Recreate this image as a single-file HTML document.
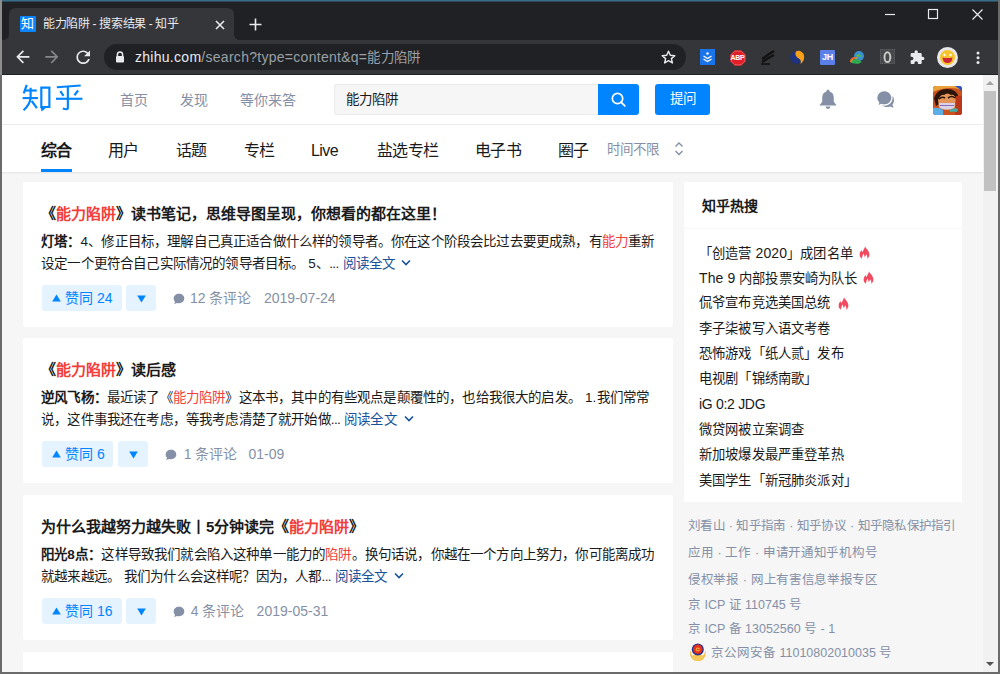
<!DOCTYPE html>
<html lang="zh-CN"><head><meta charset="utf-8">
<style>
*{box-sizing:border-box}
html,body{margin:0;padding:0;width:1000px;height:674px;overflow:hidden;background:#f6f6f6}
body{font-family:"Liberation Sans",sans-serif;position:relative;color:#1a1a1a;text-spacing-trim:space-all}
.a{position:absolute}
.t{position:absolute;white-space:nowrap;line-height:20px}
svg{position:absolute;overflow:visible}
.nav{font-size:14px;color:#8590a6}
.tabi{font-size:16px;letter-spacing:-0.6px;color:#1a1a1a}
.card{position:absolute;left:23px;width:650px;height:145px;background:#fff;border-radius:2px}
.ttl{font-size:15px;font-weight:bold;color:#1a1a1a;left:18px;top:22px}
.red{color:#f1403c}
.body{font-size:13.5px;letter-spacing:0.17px;color:#1a1a1a;left:18px}
.l1{top:50px}.l2{top:72px}
.more{color:#175199}
.vote{position:absolute;top:103px;height:26px;background:#e5f2ff;color:#0084ff;border-radius:3px;font-size:13.5px;line-height:26px}
.meta{font-size:14px;color:#8590a6;top:106px}
.vtxt{font-size:14px;color:#0084ff;top:106px}
.hot{font-size:13.33px;letter-spacing:0.16px;color:#1a1a1a;left:699px}
.sep{margin:0 4.2px 0 4px}
.foot{font-size:12.5px;letter-spacing:-0.3px;color:#8590a6;left:688px}
</style></head><body>
<!-- ===== browser chrome ===== -->
<div class="a" style="left:0;top:0;width:1000px;height:40px;background:#202124"></div>
<div class="a" style="left:0;top:0;width:1000px;height:1px;background:#386d88"></div><div class="a" style="left:0;top:1px;width:1000px;height:1px;background:#2b4a5a"></div>
<!-- active tab -->
<svg style="left:0;top:0" width="260" height="41"><path d="M2 40 Q9 40 9 34 L9 15 Q9 8 16 8 L227 8 Q234 8 234 15 L234 34 Q234 40 241 40 Z" fill="#35363a"/></svg>
<div class="a" style="left:20px;top:16px;width:16px;height:16px;background:#0a84ff;border-radius:1px"></div>
<div class="t" style="left:21px;top:14px;font-size:13px;color:#fff;line-height:20px">知</div>
<div class="t" style="left:43px;top:14px;font-size:12px;letter-spacing:-0.35px;color:#e8eaed">能力陷阱 - 搜索结果 - 知乎</div>
<svg style="left:215px;top:20px" width="10" height="10"><path d="M1 1L9 9M9 1L1 9" stroke="#e8eaed" stroke-width="1.6"/></svg>
<svg style="left:249px;top:18px" width="13" height="13"><path d="M6.5 0.5V12.5M0.5 6.5H12.5" stroke="#e8eaed" stroke-width="1.6"/></svg>
<!-- window controls -->
<svg style="left:884px;top:9px" width="100" height="12"><path d="M1 5.5H11" stroke="#e8eaed" stroke-width="1.2"/><rect x="44.5" y="0.5" width="9" height="9" fill="none" stroke="#e8eaed" stroke-width="1.2"/><path d="M88.5 0.5L98.5 10.5M98.5 0.5L88.5 10.5" stroke="#e8eaed" stroke-width="1.2"/></svg>
<!-- toolbar -->
<div class="a" style="left:0;top:40px;width:1000px;height:34px;background:#35363a"></div>
<div class="a" style="left:0;top:74px;width:1000px;height:1px;background:#202124"></div>
<svg style="left:12.7px;top:47.1px" width="20" height="20" viewBox="0 0 24.4 24.4"><path d="M20 11H7.83l5.59-5.59L12 4l-8 8 8 8 1.41-1.41L7.83 13H20v-2z" fill="#e8eaed"/></svg>
<svg style="left:42.3px;top:47.1px" width="20" height="20" viewBox="0 0 24.4 24.4"><path d="M4 11h12.17l-5.59-5.59L12 4l8 8-8 8-1.41-1.41L16.17 13H4v-2z" fill="#85878b"/></svg>
<svg style="left:72.6px;top:47.3px" width="20" height="20" viewBox="0 0 23.5 23.5"><path d="M17.65 6.35C16.2 4.9 14.21 4 12 4c-4.42 0-7.990 3.58-7.99 8s3.57 8 7.99 8c3.73 0 6.840-2.55 7.73-6h-2.08c-.82 2.33-3.04 4-5.65 4-3.310 0-6-2.69-6-6s2.69-6 6-6c1.66 0 3.14.69 4.22 1.78L13 11h7V4l-2.35 2.35z" fill="#e8eaed"/></svg>
<div class="a" style="left:104px;top:44px;width:582px;height:26px;background:#202124;border-radius:13px"></div>
<svg style="left:115px;top:51px" width="10" height="12"><path d="M2.4 5V3.6A2.6 2.6 0 0 1 7.6 3.6V5" stroke="#e8eaed" stroke-width="1.5" fill="none"/><rect x="1" y="5" width="8" height="6.5" rx="1" fill="#e8eaed"/></svg>
<div class="t" style="left:135px;top:47px;font-size:14px;letter-spacing:0.28px;color:#9aa0a6"><span style="color:#e8eaed">zhihu.com</span>/search?type=content&amp;q=<span style="font-size:13.5px;letter-spacing:0.2px">能力陷阱</span></div>
<svg style="left:661px;top:50px" width="16" height="15"><path d="M7.5 1.2L9.3 5.3L13.8 5.7L10.4 8.6L11.4 13L7.5 10.7L3.6 13L4.6 8.6L1.2 5.7L5.7 5.3Z" stroke="#e8eaed" stroke-width="1.4" fill="none" stroke-linejoin="round"/></svg>
<!-- extensions -->
<div class="a" style="left:700px;top:49px;width:15px;height:16px;background:#1a73e8"></div>
<svg style="left:700px;top:49px" width="15" height="16"><circle cx="7.5" cy="4.5" r="1.2" fill="#fff"/><path d="M3.5 7L7.5 9.5L11.5 7M3.5 10L7.5 12.5L11.5 10" stroke="#fff" stroke-width="1.3" fill="none"/></svg>
<svg style="left:729.5px;top:49.5px" width="16" height="16"><path d="M4.7 0.3H11.3L15.7 4.7V11.3L11.3 15.7H4.7L0.3 11.3V4.7Z" fill="#e01f26"/><path d="M4.9 1.2H11.1L14.8 4.9V11.1L11.1 14.8H4.9L1.2 11.1V4.9Z" fill="none" stroke="#fff" stroke-width="0.5" opacity="0.5"/></svg>
<div class="t" style="left:729.5px;top:47.5px;width:16px;text-align:center;font-size:7px;font-weight:bold;color:#fff;letter-spacing:-0.2px">ABP</div>
<svg style="left:760px;top:50px" width="16" height="15"><path d="M2 9L9 4L14 1M2 12L10 7L14 5" stroke="#111" stroke-width="2.2" fill="none"/><path d="M1 14H10" stroke="#111" stroke-width="1.5"/></svg>
<svg style="left:790px;top:49px" width="15" height="16"><circle cx="6.5" cy="8.5" r="6.3" fill="#1f3480"/><path d="M6 2.5C9 0.5 14.2 3 14.2 8C14.2 11 12.6 13.5 10.5 15C11.4 12 10.6 10.5 8.5 9.2C6 8 4.6 5 6 2.5Z" fill="#f7a01a"/></svg>
<div class="a" style="left:820px;top:50px;width:15px;height:15px;background:#5b7fe8;border-radius:1px"></div>
<div class="t" style="left:820px;top:47px;width:15px;text-align:center;font-size:9px;font-weight:bold;color:#fff;letter-spacing:-0.3px">JH</div>
<svg style="left:849px;top:50px" width="16" height="15"><circle cx="10" cy="6" r="5" fill="#3a8fd0"/><path d="M6 6L10 4L13 7" fill="#5bbf3a"/><path d="M1 12C1 7 6 6 9 8L6 9C4 9 3 11 4 13Z" fill="#f0b020"/><path d="M2 13C3 9 7 8 10 10L13 12L9 14Z" fill="#2fa84f"/><path d="M1.5 11.5C2 8 5 7.5 7 8" stroke="#e83a3a" stroke-width="1.2" fill="none"/></svg>
<div class="a" style="left:880px;top:49px;width:15px;height:15px;background:#47484b;border:1px dotted #5e5f62"></div>
<svg style="left:883px;top:51px" width="9" height="13"><ellipse cx="4.4" cy="6.2" rx="2.9" ry="4.9" stroke="#c9c9c9" stroke-width="2" fill="none"/></svg>
<svg style="left:910px;top:49.5px" width="15" height="15" viewBox="1 0.5 23 23"><path d="M20.5 11H19V7c0-1.1-.9-2-2-2h-4V3.5C13 2.12 11.88 1 10.5 1S8 2.12 8 3.5V5H4c-1.1 0-1.99.9-1.99 2v3.8H3.5c1.49 0 2.7 1.210 2.7 2.7s-1.21 2.7-2.7 2.7H2V20c0 1.1.9 2 2 2h3.8v-1.5c0-1.49 1.21-2.7 2.7-2.7 1.49 0 2.7 1.21 2.7 2.7V22H17c1.1 0 2-.9 2-2v-4h1.5c1.38 0 2.5-1.12 2.5-2.5S21.88 11 20.5 11z" fill="#e8eaed"/></svg>
<div class="a" style="left:937px;top:47px;width:21px;height:21px;background:#e8e8ea;border-radius:50%"></div>
<svg style="left:939px;top:49px" width="17" height="17"><circle cx="8.5" cy="8.5" r="7.5" fill="#f7c52b"/><circle cx="5.5" cy="6" r="1.2" fill="#fff"/><circle cx="11.5" cy="6" r="1.2" fill="#fff"/><path d="M3.5 8.5Q8.5 9.5 13.5 8.5Q13 14 8.5 14Q4 14 3.5 8.5Z" fill="#d0243a"/></svg>
<svg style="left:976px;top:51px" width="4" height="14"><circle cx="2" cy="2" r="1.5" fill="#e8eaed"/><circle cx="2" cy="6.8" r="1.5" fill="#e8eaed"/><circle cx="2" cy="11.5" r="1.5" fill="#e8eaed"/></svg>

<!-- ===== page header ===== -->
<div class="a" style="left:2px;top:75px;width:981px;height:49px;background:#fff"></div>
<div class="a" style="left:2px;top:124px;width:981px;height:1px;background:#ececec"></div>
<div class="a" style="left:2px;top:125px;width:981px;height:47px;background:#fff"></div>
<div class="a" style="left:2px;top:172px;width:981px;height:1px;background:#e8e8e8"></div>
<div class="a" style="left:2px;top:173px;width:981px;height:1px;background:#f0f0f0"></div>

<svg style="left:18px;top:80px" width="70" height="36" viewBox="0 0 1000 514"><g stroke="#0084ff" stroke-width="31" fill="none" stroke-linecap="butt" stroke-linejoin="miter">
<path d="M125 68L82 190"/><path d="M98 150H268"/><path d="M66 258H284"/><path d="M180 112V255Q172 345 80 432"/><path d="M196 300L270 402"/>
<path d="M333 108H448V386H333Z"/><path d="M336 386L346 422L385 392"/>
<path d="M555 104L895 78"/><path d="M605 160L650 226"/><path d="M858 150L806 218"/><path d="M543 268H920"/><path d="M712 96V400Q712 432 640 408"/></g></svg>
<div class="t nav" style="left:120px;top:90px">首页</div>
<div class="t nav" style="left:180px;top:90px">发现</div>
<div class="t nav" style="left:240px;top:90px">等你来答</div>

<div class="a" style="left:334px;top:84px;width:265px;height:31px;background:#f6f6f6;border:1px solid #ebebeb;border-right:none;border-radius:3px 0 0 3px"></div>
<div class="t" style="left:346px;top:90px;font-size:13.5px">能力陷阱</div>
<div class="a" style="left:598px;top:84px;width:41px;height:31px;background:#0084ff;border-radius:0 3px 3px 0"></div>
<svg style="left:611px;top:92px" width="16" height="16"><circle cx="6.5" cy="6.5" r="5.2" stroke="#fff" stroke-width="1.7" fill="none"/><path d="M10.3 10.3L13.8 13.8" stroke="#fff" stroke-width="1.8" stroke-linecap="round"/></svg>
<div class="a" style="left:655px;top:84px;width:55px;height:31px;background:#0084ff;border-radius:3px"></div>
<div class="t" style="left:655px;top:89px;width:55px;text-align:center;font-size:13.5px;color:#fff">提问</div>

<svg style="left:818px;top:89px" width="20" height="21"><path d="M10 0.8C11 0.8 11.6 1.5 11.6 2.4C14.5 3.2 15.8 5.6 15.8 8.8V12.8L18.6 16.4H1.4L4.2 12.8V8.8C4.2 5.6 5.5 3.2 8.4 2.4C8.4 1.5 9 0.8 10 0.8Z" fill="#8590a6"/><path d="M7.6 17.6H12.4A2.4 2.4 0 0 1 7.6 17.6Z" fill="#8590a6"/></svg>
<svg style="left:876px;top:90px" width="20" height="19"><path d="M11 3.5C15 3.5 18 6.4 18 10.2C18 12 17.4 13.5 16.4 14.7L17.6 17.8L14 16.4C13.1 16.8 12.1 17 11 17C7 17 4 14 4 10.2C4 6.4 7 3.5 11 3.5Z" fill="#8590a6"/><path d="M8.3 0.6C12.7 0.6 16 3.7 16 7.8C16 11.9 12.7 15 8.3 15C7.3 15 6.4 14.8 5.5 14.5L1.6 16.2L2.6 12.7C1.3 11.4 0.6 9.7 0.6 7.8C0.6 3.7 3.9 0.6 8.3 0.6Z" fill="#8590a6" stroke="#fff" stroke-width="1.3"/></svg>
<!-- avatar (luffy) -->
<div class="a" style="left:933px;top:86px;width:29px;height:29px;border-radius:3px;overflow:hidden;background:#c9521f">
  <svg style="left:0;top:0" width="29" height="29"><rect width="29" height="29" fill="#c9521f"/>
  <path d="M0 0H29V4Q15 -1 0 6Z" fill="#e9a23a"/><path d="M22 0H29V6Q26 2 22 0Z" fill="#2a52c8"/>
  <path d="M1 12Q4 3 14 3Q24 3 26 12L25 20Q14 12 3 20Z" fill="#2b140c"/>
  <path d="M5 14Q8 8 11 9Q14 6 18 9Q22 8 23 14L22 22Q14 26 6 22Z" fill="#e3955a"/>
  <path d="M6 13Q9 10 12 12M15 12Q19 9 22 12" stroke="#2b140c" stroke-width="1.6" fill="none"/>
  <path d="M6 17H22L21 22Q14 25 7 22Z" fill="#d9d2ea"/><path d="M7 19.5H21" stroke="#8a70b0" stroke-width="1"/>
  <path d="M0 22Q6 21 10 24V29H0Z" fill="#5ab0e6"/><path d="M23 10H29V29H22Z" fill="#b9381c"/><path d="M17 24Q22 21 25 23L24 26Q20 25 17 26Z" fill="#3fb0a8"/>
  </svg>
</div>

<div class="t tabi" style="left:41px;top:141px;font-weight:bold">综合</div>
<div class="a" style="left:41px;top:169px;width:31px;height:3px;background:#0084ff"></div>
<div class="t tabi" style="left:108px;top:141px">用户</div>
<div class="t tabi" style="left:176px;top:141px">话题</div>
<div class="t tabi" style="left:244px;top:141px">专栏</div>
<div class="t tabi" style="left:311px;top:141px">Live</div>
<div class="t tabi" style="left:377px;top:141px">盐选专栏</div>
<div class="t tabi" style="left:475px;top:141px">电子书</div>
<div class="t tabi" style="left:558px;top:141px">圈子</div>
<div class="t nav" style="left:607px;top:140px;font-size:13.5px">时间不限</div>
<svg style="left:674px;top:141px" width="10" height="16"><path d="M1.5 5.5L5 2L8.5 5.5M1.5 10L5 13.5L8.5 10" stroke="#8590a6" stroke-width="1.4" fill="none"/></svg>

<!-- ===== cards ===== -->
<div class="card" style="top:182px">
  <div class="t ttl">《<span class="red">能力陷阱</span>》读书笔记，思维导图呈现，你想看的都在这里！</div>
  <div class="t body l1"><b>灯塔：</b>4、修正目标，理解自己真正适合做什么样的领导者。你在这个阶段会比过去要更成熟，有<span class="red">能力</span>重新</div>
  <div class="t body l2">设定一个更符合自己实际情况的领导者目标。 5、<span style="letter-spacing:-0.6px">...</span> <span class="more">阅读全文</span></div>
  <svg style="left:378px;top:77px" width="10" height="8"><path d="M1 1.5L5 5.5L9 1.5" stroke="#175199" stroke-width="1.6" fill="none"/></svg>
  <div class="vote" style="left:19px;width:80px"></div>
  <svg style="left:29px;top:112px" width="9" height="8"><path d="M4.5 0.5L8.8 7.5H0.2Z" fill="#0084ff"/></svg>
  <div class="t vtxt" style="left:42px">赞同 24</div>
  <div class="vote" style="left:103px;width:30px"></div>
  <svg style="left:114px;top:113px" width="9" height="8"><path d="M4.5 7.5L8.8 0.5H0.2Z" fill="#0084ff"/></svg>
  <svg style="left:150px;top:110.5px" width="12" height="12"><path d="M6 0.8C9.1 0.8 11.3 2.9 11.3 5.5C11.3 8.1 9.1 10.2 6 10.2C5.3 10.2 4.7 10.1 4.1 9.9L1.3 11.1L2 8.7C1.1 7.8 0.7 6.7 0.7 5.5C0.7 2.9 2.9 0.8 6 0.8Z" fill="#8590a6"/></svg>
  <div class="t meta" style="left:167px">12 条评论</div>
  <div class="t meta" style="left:241px">2019-07-24</div>
</div>
<div class="card" style="top:338px">
  <div class="t ttl">《<span class="red">能力陷阱</span>》读后感</div>
  <div class="t body l1"><b>逆风飞杨：</b>最近读了《<span class="red">能力陷阱</span>》这本书，其中的有些观点是颠覆性的，也给我很大的启发。 1.我们常常</div>
  <div class="t body l2">说，这件事我还在考虑，等我考虑清楚了就开始做<span style="letter-spacing:-0.6px">...</span> <span class="more">阅读全文</span></div>
  <svg style="left:381px;top:77px" width="10" height="8"><path d="M1 1.5L5 5.5L9 1.5" stroke="#175199" stroke-width="1.6" fill="none"/></svg>
  <div class="vote" style="left:19px;width:71px"></div>
  <svg style="left:29px;top:112px" width="9" height="8"><path d="M4.5 0.5L8.8 7.5H0.2Z" fill="#0084ff"/></svg>
  <div class="t vtxt" style="left:42px">赞同 6</div>
  <div class="vote" style="left:94.6px;width:30px"></div>
  <svg style="left:105.6px;top:113px" width="9" height="8"><path d="M4.5 7.5L8.8 0.5H0.2Z" fill="#0084ff"/></svg>
  <svg style="left:141.5px;top:110.5px" width="12" height="12"><path d="M6 0.8C9.1 0.8 11.3 2.9 11.3 5.5C11.3 8.1 9.1 10.2 6 10.2C5.3 10.2 4.7 10.1 4.1 9.9L1.3 11.1L2 8.7C1.1 7.8 0.7 6.7 0.7 5.5C0.7 2.9 2.9 0.8 6 0.8Z" fill="#8590a6"/></svg>
  <div class="t meta" style="left:160.8px">1 条评论</div>
  <div class="t meta" style="left:225.5px">01-09</div>
</div>
<div class="card" style="top:495px">
  <div class="t ttl">为什么我越努力越失败丨5分钟读完《<span class="red">能力陷阱</span>》</div>
  <div class="t body l1"><b>阳光8点：</b>这样导致我们就会陷入这种单一能力的<span class="red">陷阱</span>。换句话说，你越在一个方向上努力，你可能离成功</div>
  <div class="t body l2">就越来越远。 我们为什么会这样呢？因为，人都<span style="letter-spacing:-0.6px">...</span> <span class="more">阅读全文</span></div>
  <svg style="left:371px;top:77px" width="10" height="8"><path d="M1 1.5L5 5.5L9 1.5" stroke="#175199" stroke-width="1.6" fill="none"/></svg>
  <div class="vote" style="left:19px;width:80px"></div>
  <svg style="left:29px;top:112px" width="9" height="8"><path d="M4.5 0.5L8.8 7.5H0.2Z" fill="#0084ff"/></svg>
  <div class="t vtxt" style="left:42px">赞同 16</div>
  <div class="vote" style="left:103px;width:30px"></div>
  <svg style="left:114px;top:113px" width="9" height="8"><path d="M4.5 7.5L8.8 0.5H0.2Z" fill="#0084ff"/></svg>
  <svg style="left:149.6px;top:110.5px" width="12" height="12"><path d="M6 0.8C9.1 0.8 11.3 2.9 11.3 5.5C11.3 8.1 9.1 10.2 6 10.2C5.3 10.2 4.7 10.1 4.1 9.9L1.3 11.1L2 8.7C1.1 7.8 0.7 6.7 0.7 5.5C0.7 2.9 2.9 0.8 6 0.8Z" fill="#8590a6"/></svg>
  <div class="t meta" style="left:167.8px">4 条评论</div>
  <div class="t meta" style="left:233.6px">2019-05-31</div>
</div>
<div class="card" style="top:652px"></div>

<!-- ===== sidebar ===== -->
<div class="a" style="left:684px;top:182px;width:278px;height:46px;background:#fff"></div>
<div class="a" style="left:684px;top:229px;width:278px;height:273px;background:#fff"></div>
<div class="t" style="left:702px;top:196px;font-size:14px;font-weight:bold">知乎热搜</div>
<div class="t hot" style="top:243px">「创造营 <span style="font-size:14px;letter-spacing:0.1px">2020</span>」成团名单</div>
<svg style="left:859px;top:246px" width="11" height="13"><path d="M6 0.3C6.6 2.6 10.4 4.6 10.4 8.6C10.4 10.6 9.4 12 8.2 12.8C8.6 11 8.2 9.4 7 8.3C7 9.6 6.3 10.6 5.3 11C5.6 9.6 5.1 8.3 4.3 7.4C4.1 9.3 3 10.2 2.9 12.7C1.4 11.8 0.6 10.3 0.6 8.8C0.6 6.3 2.1 5 2.6 4.1C2.8 5.1 3.4 5.8 3.9 6C4.1 3.6 5.9 2.3 6 0.3Z" fill="#f24a5e"/></svg>
<svg style="left:863px;top:271px" width="11" height="13"><path d="M6 0.3C6.6 2.6 10.4 4.6 10.4 8.6C10.4 10.6 9.4 12 8.2 12.8C8.6 11 8.2 9.4 7 8.3C7 9.6 6.3 10.6 5.3 11C5.6 9.6 5.1 8.3 4.3 7.4C4.1 9.3 3 10.2 2.9 12.7C1.4 11.8 0.6 10.3 0.6 8.8C0.6 6.3 2.1 5 2.6 4.1C2.8 5.1 3.4 5.8 3.9 6C4.1 3.6 5.9 2.3 6 0.3Z" fill="#f24a5e"/></svg>
<svg style="left:838px;top:297px" width="11" height="13"><path d="M6 0.3C6.6 2.6 10.4 4.6 10.4 8.6C10.4 10.6 9.4 12 8.2 12.8C8.6 11 8.2 9.4 7 8.3C7 9.6 6.3 10.6 5.3 11C5.6 9.6 5.1 8.3 4.3 7.4C4.1 9.3 3 10.2 2.9 12.7C1.4 11.8 0.6 10.3 0.6 8.8C0.6 6.3 2.1 5 2.6 4.1C2.8 5.1 3.4 5.8 3.9 6C4.1 3.6 5.9 2.3 6 0.3Z" fill="#f24a5e"/></svg>
<div class="t hot" style="top:268px"><span style="font-size:14px;letter-spacing:0.1px">The 9</span> 内部投票安崎为队长</div>
<div class="t hot" style="top:293px">侃爷宣布竞选美国总统</div>
<div class="t hot" style="top:319px">李子柒被写入语文考卷</div>
<div class="t hot" style="top:344px">恐怖游戏「纸人贰」发布</div>
<div class="t hot" style="top:369px">电视剧「锦绣南歌」</div>
<div class="t hot" style="top:394px;font-size:14px;letter-spacing:-0.3px">iG 0:2 JDG</div>
<div class="t hot" style="top:420px">微贷网被立案调查</div>
<div class="t hot" style="top:445px">新加坡爆发最严重登革热</div>
<div class="t hot" style="top:471px">美国学生「新冠肺炎派对」</div>

<div class="t foot" style="top:516px;letter-spacing:-0.75px">刘看山<span class="sep">·</span>知乎指南<span class="sep">·</span>知乎协议<span class="sep">·</span>知乎隐私保护指引</div>
<div class="t foot" style="top:543px">应用<span class="sep">·</span>工作<span class="sep">·</span>申请开通知乎机构号</div>
<div class="t foot" style="top:570px">侵权举报<span class="sep">·</span>网上有害信息举报专区</div>
<div class="t foot" style="top:595px;letter-spacing:0">京 ICP 证 110745 号</div>
<div class="t foot" style="top:619px;letter-spacing:0">京 ICP 备 13052560 号 - 1</div>
<div class="t foot" style="left:711px;top:643px;letter-spacing:0">京公网安备 11010802010035 号</div>

<svg style="left:689px;top:642px" width="18" height="20"><path d="M1 8Q0.5 15 4 17.5Q8.8 20.5 13.6 17.5Q17 15 16.6 8Q15 16 8.8 16Q2.6 16 1 8Z" fill="#f0b637"/><ellipse cx="8.8" cy="15.5" rx="6" ry="3.6" fill="#f4c95a"/><circle cx="8.8" cy="7.6" r="6" fill="#22308a"/><circle cx="8.8" cy="7.3" r="4.7" fill="#e8321e"/><circle cx="8.8" cy="7.5" r="2" fill="#f2b33a"/><circle cx="8.8" cy="7.5" r="1" fill="#e8321e"/></svg>
<!-- scrollbar & borders -->
<div class="a" style="left:983px;top:75px;width:15px;height:597px;background:#f1f1f1"></div>
<div class="a" style="left:984px;top:91px;width:12px;height:100px;background:#c1c1c1"></div>
<svg style="left:985px;top:79px" width="10" height="8"><path d="M1 6L5 2L9 6Z" fill="#a3a3a3"/></svg>
<svg style="left:985px;top:660px" width="10" height="8"><path d="M1 2L5 6L9 2Z" fill="#505050"/></svg>
<div class="a" style="left:0;top:0;width:2px;height:674px;background:#6b6b6b"></div><div class="a" style="left:0;top:0;width:2px;height:75px;background:#8e8e8e"></div>
<div class="a" style="left:998px;top:0;width:2px;height:674px;background:#6b6b6b"></div>
<div class="a" style="left:0;top:672px;width:1000px;height:2px;background:#6b6b6b"></div>
</body></html>
